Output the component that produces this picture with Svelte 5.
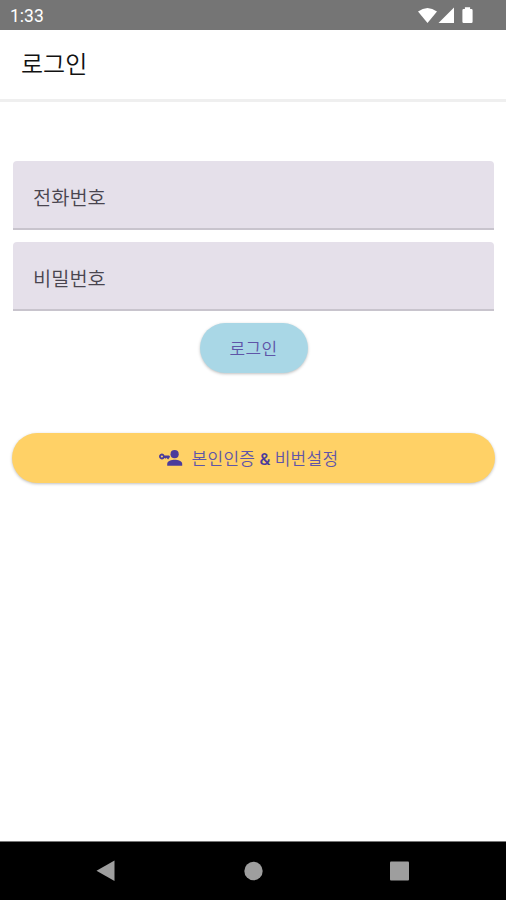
<script>
	let phone = $state('');
	let password = $state('');

	const handleSubmit = (event) => {
		event.preventDefault();
	};
</script>

<div class="screen">
	<div class="status-bar">
		<span class="clock">1:33</span>
		<svg class="status-icons" width="56" height="18" viewBox="0 0 56 18" aria-hidden="true">
			<path d="M0 4.5Q9.5 -2.5 19 4.5L9.5 16Z" />
			<path d="M36 0.5V16H20.5Z" />
			<path d="M46.9 0.3h5.2v1.7h1.3q1.2 0 1.2 1.2v11.6q0 1.2-1.2 1.2h-7.8q-1.2 0-1.2-1.2V3.2q0-1.2 1.2-1.2h1.3z" />
		</svg>
	</div>

	<header>
		<h1>로그인</h1>
	</header>

	<main>
		<form onsubmit={handleSubmit}>
			<input type="text" bind:value={phone} placeholder="전화번호" />
			<input type="password" bind:value={password} placeholder="비밀번호" />
			<button type="submit" class="login-btn">로그인</button>
		</form>

		<button type="button" class="verify-btn">
			<svg width="24" height="16" viewBox="0 0 24 16" aria-hidden="true">
				<circle cx="15.6" cy="4.2" r="4.1" />
				<path d="M8.2 15.7v-1.8c0-2.8 4.4-4.1 7.5-4.1s7.5 1.3 7.5 4.1v1.8z" />
				<path
					fill-rule="evenodd"
					d="M2.9 3.6a2.9 2.9 0 0 1 2.6 1.8h4.6l1 1.4-2 2.8-1.7-1.9-.7 1-.9-.8h-.3a2.9 2.9 0 1 1-2.6-4.3zm0 1.8a1.1 1.1 0 1 0 0 2.2 1.1 1.1 0 0 0 0-2.2z"
				/>
			</svg>
			<span>본인인증 <span class="amp">&amp;</span> 비번설정</span>
		</button>
	</main>

	<nav>
		<svg width="20" height="22" viewBox="0 0 20 22" aria-hidden="true">
			<path d="M18.5 0.5V21L0.5 10.7Z" />
		</svg>
		<svg width="20" height="22" viewBox="0 0 20 22" aria-hidden="true">
			<circle cx="10.5" cy="11" r="9.2" />
		</svg>
		<svg width="20" height="22" viewBox="0 0 20 22" aria-hidden="true">
			<rect x="0" y="1.5" width="19" height="19" rx="1" />
		</svg>
	</nav>
</div>

<style>
	:global(body) {
		margin: 0;
		background: #fff;
		font-family: 'Noto Sans CJK KR', 'Noto Sans', sans-serif;
	}

	.screen {
		display: flex;
		flex-direction: column;
		height: 900px;
		box-sizing: border-box;
	}

	.status-bar {
		display: flex;
		align-items: center;
		justify-content: space-between;
		height: 30px;
		padding: 0 32px 0 10px;
		box-sizing: border-box;
		background: #757575;
		color: #fff;
	}

	.clock {
		font-family: Roboto, sans-serif;
		font-size: 17.5px;
		line-height: 20px;
		padding-top: 2px;
	}

	.status-icons {
		fill: #fff;
		padding-top: 1px;
	}

	header {
		display: flex;
		align-items: center;
		height: 72px;
		padding: 0 21px 4px;
		box-sizing: border-box;
		border-bottom: 3px solid #efefef;
	}

	h1 {
		margin: 0;
		font-size: 24px;
		font-weight: 350;
		line-height: 32px;
		color: #111;
	}

	main {
		flex: 1;
		padding: 59px 11px 0 12px;
	}

	form {
		display: flex;
		flex-direction: column;
		align-items: center;
		gap: 12px;
		padding: 0 1px;
	}

	input {
		width: 100%;
		height: 69px;
		padding: 4px 20px 0;
		box-sizing: border-box;
		border: none;
		border-bottom: 2px solid #c8c4cd;
		border-radius: 4px 4px 0 0;
		background: #e5e0ea;
		font-family: inherit;
		font-size: 19.8px;
		font-weight: 350;
		color: #49454f;
		outline: none;
	}

	input::placeholder {
		color: #49454f;
		opacity: 1;
	}

	button {
		display: flex;
		align-items: center;
		justify-content: center;
		height: 50px;
		padding: 0 0 1px;
		border: none;
		border-radius: 25px;
		font-family: inherit;
		font-size: 17px;
		font-weight: 350;
		letter-spacing: 0.3px;
		color: #5f55a8;
		box-shadow: 0 1px 3px rgba(0, 0, 0, 0.25);
	}

	.login-btn {
		width: 108px;
		margin-top: -0.5px;
		background: #a9d7e6;
	}

	.verify-btn {
		width: 100%;
		gap: 9px;
		margin-top: 60.5px;
		padding-right: 10px;
		background: #ffd166;
	}

	.verify-btn svg {
		fill: #4b3b9b;
	}

	.amp {
		font-family: Roboto, sans-serif;
		font-weight: 500;
		color: #4b3b9b;
	}

	nav {
		display: flex;
		align-items: center;
		justify-content: space-between;
		height: 59px;
		padding: 0 96px;
		box-sizing: border-box;
		border-top: 1px solid #777;
		background: #000;
	}

	nav svg {
		fill: #9e9e9e;
	}
</style>
